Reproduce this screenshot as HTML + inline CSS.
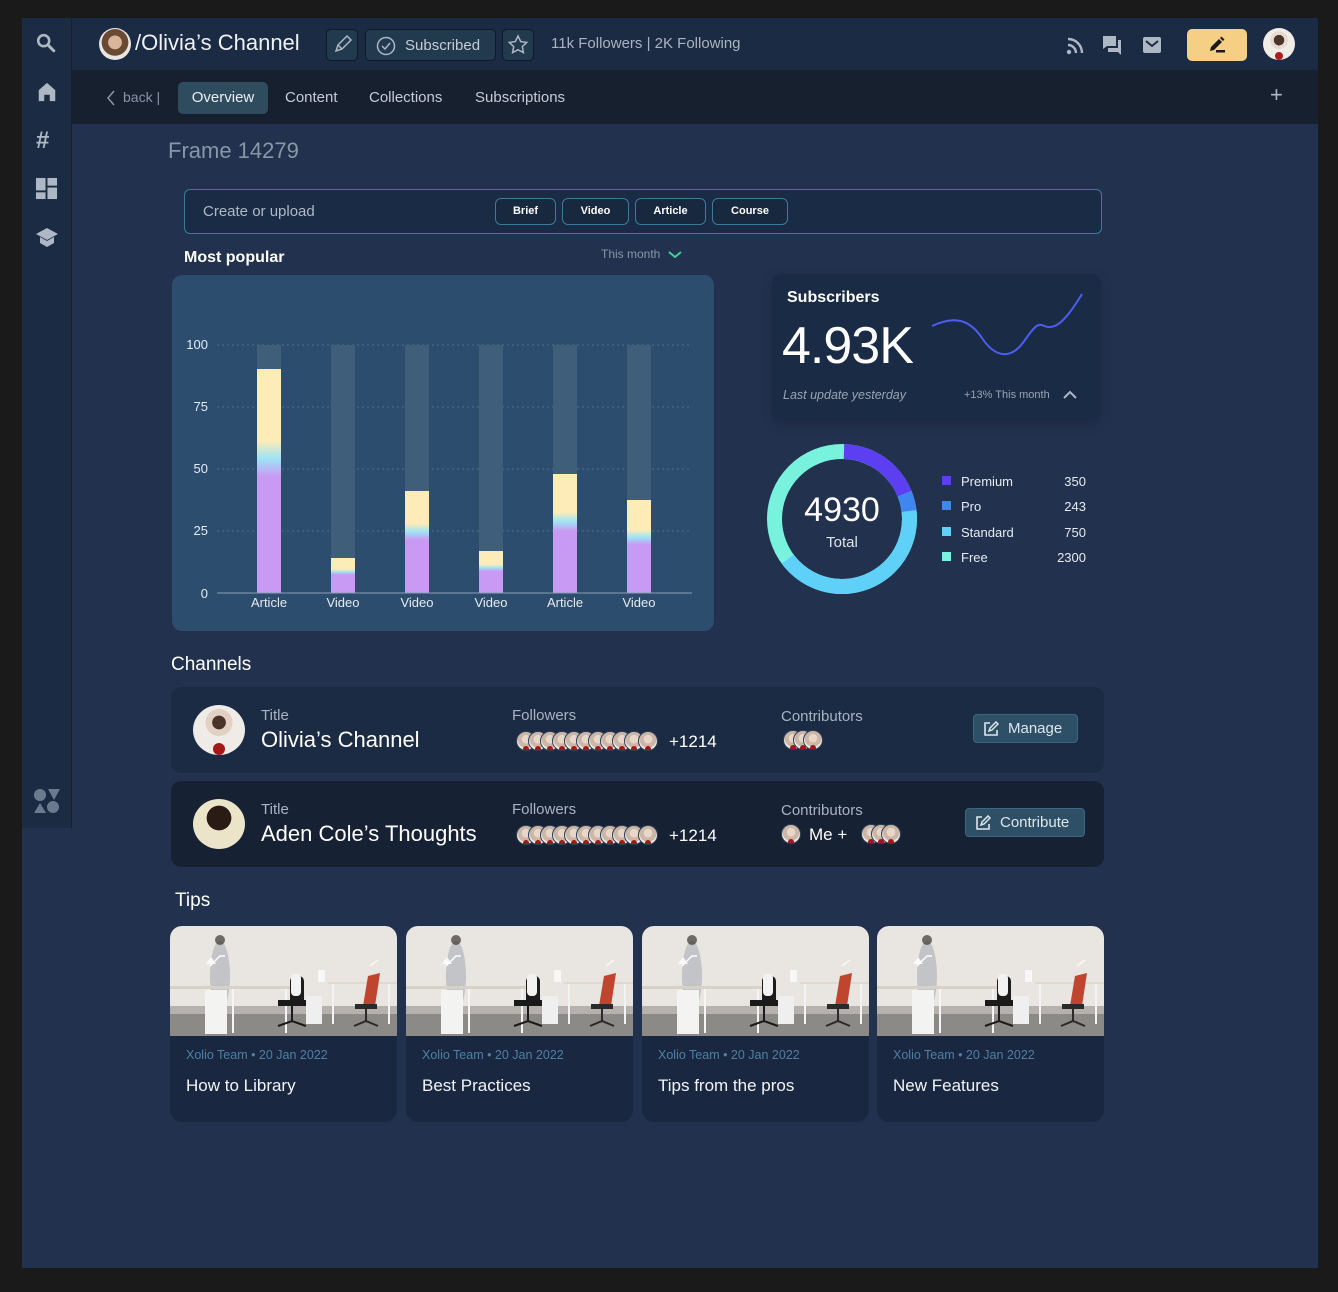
<!DOCTYPE html>
<html><head><meta charset="utf-8"><style>
*{box-sizing:border-box;margin:0;padding:0}
body{width:1338px;height:1292px;background:#1a1a1a;font-family:"Liberation Sans",sans-serif;color:#fff;position:relative;overflow:hidden}
.abs{position:absolute}
#app{left:22px;top:18px;width:1296px;height:1250px;background:#22324e}
#side{left:22px;top:18px;width:50px;height:810px;background:#1b2b43;border-right:1px solid #15202f}
#top{left:72px;top:18px;width:1246px;height:52px;background:#1b2b43}
#nav{left:72px;top:70px;width:1246px;height:54px;background:#16202f}
.btn{border:1px solid #101a26;background:#223a4e;border-radius:5px}
.pill{position:absolute;top:198px;height:27px;border:1px solid #3d7a99;border-radius:6px;font-size:11px;font-weight:bold;text-align:center;line-height:25px;background:#18283f}
.card{background:#192840;border-radius:10px}
.lab{color:#aab3c0;font-size:15px}
.av{width:20px;height:20px;border-radius:50%;background:radial-gradient(circle at 50% 40%,#e8d6c8 0 30%,#cbb6a7 31% 60%,#efe9e2 61%);border:1.5px solid #2b3f5a;position:absolute;top:0}
.av::after{content:"";position:absolute;left:6px;bottom:0;width:6px;height:4px;background:#a01818;border-radius:3px 3px 0 0}
.tip{position:absolute;top:926px;width:227px;height:196px;background:#192840;border-radius:12px;overflow:hidden}
.tip .meta{position:absolute;left:16px;top:122px;color:#4f7fa3;font-size:12.5px}
.tip .t{position:absolute;left:16px;top:150px;font-size:17px;color:#f2f4f7}
</style></head><body>
<div id="app" class="abs"></div>
<div id="side" class="abs">
 <svg class="abs" style="left:13px;top:14px" width="22" height="22" viewBox="0 0 24 24"><circle cx="9.5" cy="9.5" r="6" fill="none" stroke="#aeb7c4" stroke-width="2.8"/><path d="M14 14l6.5 6.5" stroke="#aeb7c4" stroke-width="3.2" stroke-linecap="round"/></svg>
 <svg class="abs" style="left:14px;top:63px" width="22" height="22" viewBox="0 0 24 24"><path d="M12 2L3 10v12h6v-7h6v7h6V10z" fill="#aeb7c4"/></svg>
 <div class="abs" style="left:14px;top:109px;font-size:24px;font-weight:bold;color:#aeb7c4">#</div>
 <svg class="abs" style="left:13px;top:159px" width="23" height="23" viewBox="0 0 24 24" fill="#aeb7c4"><rect x="1" y="1" width="10" height="13"/><rect x="13" y="1" width="10" height="8"/><rect x="13" y="11" width="10" height="12"/><rect x="1" y="16" width="10" height="7"/></svg>
 <svg class="abs" style="left:13px;top:208px" width="24" height="22" viewBox="0 0 24 22"><path d="M12 2L1 8l11 6 11-6z" fill="#aeb7c4"/><path d="M5 11v6l7 4 7-4v-6l-7 4z" fill="#aeb7c4"/></svg>
 <svg class="abs" style="left:11px;top:770px" width="28" height="26" viewBox="0 0 28 26" fill="#6b7a8f"><circle cx="7" cy="7" r="6"/><path d="M15 1h12l-6 11z"/><path d="M1 25l6-10 6 10z"/><circle cx="20" cy="19" r="6"/></svg>
</div>
<div id="top" class="abs">
 <div class="abs" style="left:27px;top:10px;width:32px;height:32px;border-radius:50%;background:radial-gradient(circle at 50% 45%,#d9b59b 0 28%,#6b4a34 30% 55%,#e9e6e2 57%)"></div>
 <div class="abs" style="left:63px;top:12px;font-size:22px;color:#eef1f5">/Olivia’s Channel</div>
 <div class="abs btn" style="left:254px;top:11px;width:32px;height:32px"><svg width="30" height="30" viewBox="0 0 30 30"><path d="M9 21l2-6 9-9 4 4-9 9z M11 15l4 4" fill="none" stroke="#aeb7c4" stroke-width="1.5"/></svg></div>
 <div class="abs btn" style="left:293px;top:11px;width:131px;height:32px"><svg class="abs" style="left:10px;top:6px" width="20" height="20" viewBox="0 0 20 20"><circle cx="10" cy="10" r="8.5" fill="none" stroke="#aeb7c4" stroke-width="1.5"/><path d="M6 10l3 3 5-6" fill="none" stroke="#aeb7c4" stroke-width="1.5"/></svg><span class="abs" style="left:39px;top:7px;font-size:15px;color:#c5ccd6">Subscribed</span></div>
 <div class="abs btn" style="left:430px;top:11px;width:32px;height:32px"><svg width="30" height="30" viewBox="0 0 30 30"><path d="M15 6l2.7 5.6 6 .8-4.4 4.2 1.1 6L15 19.7 9.6 22.6l1.1-6-4.4-4.2 6-.8z" fill="none" stroke="#aeb7c4" stroke-width="1.5"/></svg></div>
 <div class="abs" style="left:479px;top:17px;font-size:15px;color:#aab3c0">11k Followers | 2K Following</div>
 <svg class="abs" style="left:994px;top:19px" width="18" height="18" viewBox="0 0 18 18"><circle cx="3" cy="15" r="2.2" fill="#aeb7c4"/><path d="M2 8a8 8 0 018 8M2 2a14 14 0 0114 14" fill="none" stroke="#aeb7c4" stroke-width="2.4"/></svg>
 <svg class="abs" style="left:1031px;top:18px" width="20" height="20" viewBox="0 0 20 20" fill="#aeb7c4"><path d="M0 0h13v10H4l-4 3z"/><path d="M15 4h3v15l-3-3H5v-4h10z"/></svg>
 <svg class="abs" style="left:1071px;top:19px" width="18" height="16" viewBox="0 0 18 16"><rect width="18" height="16" rx="2" fill="#aeb7c4"/><path d="M3 4l6 5 6-5" fill="none" stroke="#1b2b43" stroke-width="2"/></svg>
 <div class="abs" style="left:1115px;top:11px;width:60px;height:32px;background:#f4cf84;border-radius:5px"><svg class="abs" style="left:20px;top:6px" width="20" height="20" viewBox="0 0 20 20"><path d="M3 16l1-4 8-8 3 3-8 8z M13 3l1.5-1.5 3 3L16 6z" fill="#1a1a1a"/><rect x="9" y="15" width="9" height="2.5" fill="#1a1a1a"/></svg></div>
 <div class="abs" style="left:1191px;top:10px;width:32px;height:32px;border-radius:50%;background:radial-gradient(circle at 50% 38%,#4a3428 0 20%,#e6d9cf 21% 34%,#f0ece6 35%);overflow:hidden"><div class="abs" style="left:12px;top:24px;width:8px;height:8px;background:#b01d1d;border-radius:50%"></div></div>
</div>
<div id="nav" class="abs">
 <svg class="abs" style="left:34px;top:20px" width="10" height="16" viewBox="0 0 10 16"><path d="M8 1L2 8l6 7" fill="none" stroke="#8a95a5" stroke-width="1.5"/></svg>
 <div class="abs" style="left:51px;top:19px;font-size:14px;color:#8a95a5">back |</div>
 <div class="abs" style="left:106px;top:12px;width:90px;height:32px;background:#2e4c5e;border-radius:5px;text-align:center;line-height:32px;font-size:15px;color:#eaeef2">Overview</div>
 <div class="abs" style="left:213px;top:19px;font-size:15px;color:#c5ccd6">Content</div>
 <div class="abs" style="left:297px;top:19px;font-size:15px;color:#c5ccd6">Collections</div>
 <div class="abs" style="left:403px;top:19px;font-size:15px;color:#c5ccd6">Subscriptions</div>
 <div class="abs" style="left:1198px;top:12px;font-size:22px;color:#aeb7c4">+</div>
</div>
<div class="abs" style="left:168px;top:138px;font-size:22px;color:#8996a6">Frame 14279</div>
<div class="abs" style="left:184px;top:189px;width:918px;height:45px;border:1.5px solid #3a7b9c;border-radius:6px;background:#192b45"></div>
<div class="abs" style="left:203px;top:203px;font-size:15px;color:#b0b9c5">Create or upload</div>
<div class="pill" style="left:495px;width:61px">Brief</div>
<div class="pill" style="left:562px;width:67px">Video</div>
<div class="pill" style="left:635px;width:71px">Article</div>
<div class="pill" style="left:712px;width:76px">Course</div>
<div class="abs" style="left:184px;top:249px;font-size:16px;font-weight:bold">Most popular</div>
<div class="abs" style="left:601px;top:247px;font-size:12px;color:#8a95a5">This month</div>
<svg class="abs" style="left:668px;top:250px" width="14" height="10"><path d="M1 2l6 5 6-5" fill="none" stroke="#3ecf9e" stroke-width="2"/></svg>
<svg class="abs" style="left:172px;top:275px" width="542" height="356" viewBox="0 0 542 356">
 <defs><linearGradient id="g" x1="0" y1="0" x2="0" y2="1"><stop offset="0" stop-color="#fdecb8"/><stop offset=".32" stop-color="#fdecb8"/><stop offset=".4" stop-color="#9ee4f5"/><stop offset=".48" stop-color="#c99af3"/><stop offset="1" stop-color="#c99af3"/></linearGradient></defs>
 <rect width="542" height="356" rx="10" fill="#2c4d6e"/>
 <g stroke="#52708e" stroke-dasharray="2 3" stroke-width="1"><line x1="45" x2="520" y1="70" y2="70"/><line x1="45" x2="520" y1="132" y2="132"/><line x1="45" x2="520" y1="194" y2="194"/><line x1="45" x2="520" y1="256" y2="256"/></g>
 <g fill="#3f5e7a"><rect x="85" y="70" width="24" height="248"/><rect x="159" y="70" width="24" height="248"/><rect x="233" y="70" width="24" height="248"/><rect x="307" y="70" width="24" height="248"/><rect x="381" y="70" width="24" height="248"/><rect x="455" y="70" width="24" height="248"/></g>
 <g fill="url(#g)"><rect x="85" y="94" width="24" height="224"/><rect x="159" y="283" width="24" height="35"/><rect x="233" y="216" width="24" height="102"/><rect x="307" y="276" width="24" height="42"/><rect x="381" y="199" width="24" height="119"/><rect x="455" y="225" width="24" height="93"/></g>
 <line x1="45" x2="520" y1="318" y2="318" stroke="#8aa0b8" stroke-width="1"/>
 <g fill="#e6ebf1" font-size="13" font-family="Liberation Sans" text-anchor="end"><text x="36" y="74">100</text><text x="36" y="136">75</text><text x="36" y="198">50</text><text x="36" y="260">25</text><text x="36" y="323">0</text></g>
 <g fill="#e6ebf1" font-size="13" font-family="Liberation Sans" text-anchor="middle"><text x="97" y="332">Article</text><text x="171" y="332">Video</text><text x="245" y="332">Video</text><text x="319" y="332">Video</text><text x="393" y="332">Article</text><text x="467" y="332">Video</text></g>
</svg>
<div class="abs card" style="left:772px;top:274px;width:329px;height:146px;background:#1a2b45;box-shadow:0 4px 12px rgba(0,0,0,.2)"></div>
<div class="abs" style="left:787px;top:289px;font-size:16px;font-weight:bold">Subscribers</div>
<div class="abs" style="left:782px;top:316px;font-size:52px;letter-spacing:-1px">4.93K</div>
<svg class="abs" style="left:930px;top:290px" width="156" height="70"><path d="M2 36C25 25 40 30 52 48S80 72 95 50S110 36 118 37S135 32 152 4" fill="none" stroke="#4d5df0" stroke-width="2"/></svg>
<div class="abs" style="left:783px;top:388px;font-size:12.5px;font-style:italic;color:#9aa4b2">Last update yesterday</div>
<div class="abs" style="left:964px;top:389px;font-size:11px;color:#9aa4b2">+13% This month</div>
<svg class="abs" style="left:1063px;top:390px" width="14" height="10"><path d="M1 8l6-6 6 6" fill="none" stroke="#aeb7c4" stroke-width="2"/></svg>
<svg class="abs" style="left:767px;top:444px" width="150" height="150" viewBox="0 0 150 150">
 <g transform="rotate(-90 75 75)" fill="none" stroke-width="15">
  <circle cx="75" cy="75" r="67.5" stroke="#78f2dc"/>
  <circle cx="75" cy="75" r="67.5" stroke="#5fd0f8" stroke-dasharray="0 98 177 500"/>
  <circle cx="75" cy="75" r="67.5" stroke="#3f86f0" stroke-dasharray="0 80 18 500"/>
  <circle cx="75" cy="75" r="67.5" stroke="#5b3ff0" stroke-dasharray="0 2 78 500"/>
 </g>
 <text x="75" y="77" text-anchor="middle" fill="#fff" font-size="34" font-family="Liberation Sans">4930</text>
 <text x="75" y="103" text-anchor="middle" fill="#dfe4ea" font-size="15" font-family="Liberation Sans">Total</text>
</svg>
<div class="abs" style="left:942px;top:476px;width:9px;height:9px;background:#5b3ff0"></div>
<div class="abs" style="left:942px;top:501px;width:9px;height:9px;background:#3f86f0"></div>
<div class="abs" style="left:942px;top:527px;width:9px;height:9px;background:#5fd0f8"></div>
<div class="abs" style="left:942px;top:552px;width:9px;height:9px;background:#78f2dc"></div>
<div class="abs" style="left:961px;top:469px;font-size:13px;line-height:25.4px;color:#e6ebf1">Premium<br>Pro<br>Standard<br>Free</div>
<div class="abs" style="left:1040px;top:469px;width:46px;text-align:right;font-size:13px;line-height:25.4px;color:#e6ebf1">350<br>243<br>750<br>2300</div>
<div class="abs" style="left:171px;top:654px;font-size:19px">Channels</div>
<div class="abs card" style="left:171px;top:687px;width:933px;height:86px;background:#1b2b44"></div>
<div class="abs card" style="left:171px;top:781px;width:933px;height:86px;background:#172134"></div>
<div class="abs" style="left:193px;top:705px;width:52px;height:50px;border-radius:50%;background:radial-gradient(circle at 50% 35%,#4a3428 0 16%,#e2d0c4 17% 32%,#efece8 33%);overflow:hidden"><div class="abs" style="left:20px;top:38px;width:12px;height:12px;border-radius:50%;background:#a51818"></div></div>
<div class="abs" style="left:193px;top:799px;width:52px;height:50px;border-radius:50%;background:radial-gradient(circle at 50% 38%,#2a1c14 0 30%,#ece4c8 31%);"></div>
<div class="abs lab" style="left:261px;top:707px">Title</div>
<div class="abs" style="left:261px;top:727px;font-size:22px">Olivia’s Channel</div>
<div class="abs lab" style="left:261px;top:801px">Title</div>
<div class="abs" style="left:261px;top:821px;font-size:22px">Aden Cole’s Thoughts</div>
<div class="abs lab" style="left:512px;top:707px">Followers</div>
<div class="abs lab" style="left:512px;top:801px">Followers</div>
<div class="abs lab" style="left:781px;top:708px">Contributors</div>
<div class="abs lab" style="left:781px;top:802px">Contributors</div>
<div class="abs" style="left:516px;top:731px;width:150px;height:22px">
 <div class="av" style="left:0"></div><div class="av" style="left:12px"></div><div class="av" style="left:24px"></div><div class="av" style="left:36px"></div><div class="av" style="left:48px"></div><div class="av" style="left:60px"></div><div class="av" style="left:72px"></div><div class="av" style="left:84px"></div><div class="av" style="left:96px"></div><div class="av" style="left:108px"></div><div class="av" style="left:122px"></div>
</div>
<div class="abs" style="left:669px;top:732px;font-size:17px">+1214</div>
<div class="abs" style="left:516px;top:825px;width:150px;height:22px">
 <div class="av" style="left:0"></div><div class="av" style="left:12px"></div><div class="av" style="left:24px"></div><div class="av" style="left:36px"></div><div class="av" style="left:48px"></div><div class="av" style="left:60px"></div><div class="av" style="left:72px"></div><div class="av" style="left:84px"></div><div class="av" style="left:96px"></div><div class="av" style="left:108px"></div><div class="av" style="left:122px"></div>
</div>
<div class="abs" style="left:669px;top:826px;font-size:17px">+1214</div>
<div class="abs" style="left:783px;top:730px;width:60px;height:22px"><div class="av" style="left:0"></div><div class="av" style="left:10px"></div><div class="av" style="left:20px"></div></div>
<div class="abs" style="left:781px;top:824px;width:30px;height:22px"><div class="av" style="left:0"></div></div>
<div class="abs" style="left:809px;top:825px;font-size:17px">Me +</div>
<div class="abs" style="left:861px;top:824px;width:60px;height:22px"><div class="av" style="left:0"></div><div class="av" style="left:10px"></div><div class="av" style="left:20px"></div></div>
<div class="abs" style="left:973px;top:714px;width:105px;height:29px;background:#2d5066;border:1px solid #3a6680;border-radius:4px"><svg class="abs" style="left:9px;top:6px" width="16" height="16" viewBox="0 0 16 16"><path d="M7 2H2v12h12V9" fill="none" stroke="#dfe6ec" stroke-width="1.6"/><path d="M6 10l1-3 6-6 2 2-6 6z" fill="none" stroke="#dfe6ec" stroke-width="1.5"/></svg><span class="abs" style="left:34px;top:5px;font-size:15px;color:#dfe6ec">Manage</span></div>
<div class="abs" style="left:965px;top:808px;width:120px;height:29px;background:#2d5066;border:1px solid #3a6680;border-radius:4px"><svg class="abs" style="left:9px;top:6px" width="16" height="16" viewBox="0 0 16 16"><path d="M7 2H2v12h12V9" fill="none" stroke="#dfe6ec" stroke-width="1.6"/><path d="M6 10l1-3 6-6 2 2-6 6z" fill="none" stroke="#dfe6ec" stroke-width="1.5"/></svg><span class="abs" style="left:34px;top:5px;font-size:15px;color:#dfe6ec">Contribute</span></div>
<div class="abs" style="left:175px;top:890px;font-size:19px">Tips</div>
<svg width="0" height="0" style="position:absolute"><defs><g id="photo">
 <rect width="227" height="110" fill="#e9e6e1"/>
 <rect y="84" width="227" height="26" fill="#8c8a86"/>
 <rect y="80" width="227" height="8" fill="#b5b2ad"/>
 <ellipse cx="50" cy="50" rx="10" ry="35" fill="#b9bcc0" opacity=".8"/>
 <circle cx="50" cy="14" r="5" fill="#3a3430" opacity=".7"/>
 <rect x="0" y="60" width="120" height="3" fill="#d8d2c6"/>
 <rect x="35" y="64" width="22" height="44" fill="#f3f3f2"/>
 <rect x="62" y="63" width="2" height="44" fill="#f5f5f5"/>
 <rect x="115" y="63" width="2" height="44" fill="#f5f5f5"/>
 <path d="M40 40l10-10h5" stroke="#fff" stroke-width="1.5" fill="none"/>
 <path d="M36 38h10l-5-7z" fill="#fafafa"/>
 <rect x="120" y="50" width="14" height="30" rx="5" fill="#1c1c1c"/>
 <rect x="121" y="48" width="10" height="22" rx="4" fill="#f2f2f2"/>
 <rect x="108" y="74" width="28" height="6" fill="#1a1a1a"/>
 <path d="M122 80v15M108 100l14-5 14 5" stroke="#1a1a1a" stroke-width="2" fill="none"/>
 <rect x="136" y="70" width="16" height="28" fill="#efefef"/>
 <rect x="158" y="56" width="70" height="2" fill="#dedad2"/>
 <rect x="162" y="58" width="2" height="40" fill="#f3f3f3"/>
 <rect x="218" y="58" width="2" height="40" fill="#f3f3f3"/>
 <path d="M198 50l12-3-5 33h-12z" fill="#c0452e"/>
 <rect x="185" y="78" width="22" height="5" fill="#2a2a2a"/>
 <path d="M196 83v12M184 100l12-5 12 5" stroke="#2a2a2a" stroke-width="2" fill="none"/>
 <path d="M200 40l8-6" stroke="#f5f5f5" stroke-width="2"/>
 <rect x="148" y="44" width="7" height="12" fill="#f7f7f7"/>
</g></defs></svg>
<div class="tip" style="left:170px"><svg width="227" height="110"><use href="#photo"/></svg><div class="meta">Xolio Team • 20 Jan 2022</div><div class="t">How to Library</div></div>
<div class="tip" style="left:406px"><svg width="227" height="110"><use href="#photo"/></svg><div class="meta">Xolio Team • 20 Jan 2022</div><div class="t">Best Practices</div></div>
<div class="tip" style="left:642px"><svg width="227" height="110"><use href="#photo"/></svg><div class="meta">Xolio Team • 20 Jan 2022</div><div class="t">Tips from the pros</div></div>
<div class="tip" style="left:877px"><svg width="227" height="110"><use href="#photo"/></svg><div class="meta">Xolio Team • 20 Jan 2022</div><div class="t">New Features</div></div>
</body></html>
